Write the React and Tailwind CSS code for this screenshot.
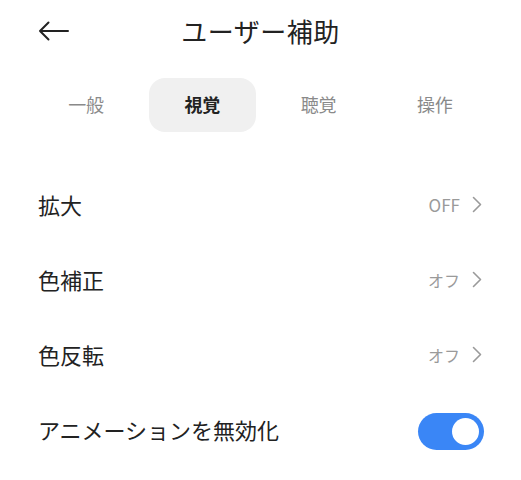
import React, { useState } from "react";

const font = { fontFamily: '"Noto Sans CJK JP", "Noto Sans", sans-serif' };

const tabs = ["一般", "視覚", "聴覚", "操作"];

const rows = [
  { label: "拡大", value: "OFF" },
  { label: "色補正", value: "オフ" },
  { label: "色反転", value: "オフ" },
];

const Chevron = () => (
  <svg width="10" height="17" viewBox="0 0 10 17" fill="none">
    <path d="M1.5 1.5 L8.5 8.5 L1.5 15.5" stroke="#9a9a9a" strokeWidth="1.6" strokeLinecap="round" strokeLinejoin="round" />
  </svg>
);

export default function App() {
  const [active, setActive] = useState(1);
  const [noAnim, setNoAnim] = useState(true);

  return (
    <div className="w-[521px] h-[480px] bg-white text-[#222] overflow-hidden" style={font}>
      {/* header */}
      <div className="grid grid-cols-[1fr_auto_1fr] items-center h-16 px-[38px]">
        <button className="w-[31px] h-[20px] -mt-[2px]">
          <svg width="31" height="20" viewBox="0 0 31 20" fill="none">
            <path d="M30 10 H2 M10.5 1.5 L2 10 L10.5 18.5" stroke="#222" strokeWidth="2" strokeLinecap="round" strokeLinejoin="round" />
          </svg>
        </button>
        <h1 className="text-[26px] leading-none tracking-[0.5px] -mt-[2px]">ユーザー補助</h1>
        <div />
      </div>

      {/* tabs */}
      <div className="grid grid-cols-4 mt-[14px] px-[28px] h-[54px]">
        {tabs.map((t, i) => (
          <div key={t} className="px-[5px]">
            <button
              onClick={() => setActive(i)}
              className={
                "w-full h-full rounded-[16px] text-[18px] pb-[2px] " +
                (i === active ? "bg-[#f0f0f0] font-bold text-[#222]" : "text-[#8a8a8a]")
              }
            >
              {t}
            </button>
          </div>
        ))}
      </div>

      {/* list */}
      <div className="mt-[35px] px-[38px]">
        {rows.map((r) => (
          <div key={r.label} className="flex items-center justify-between h-[75px]">
            <span className="text-[22px]">{r.label}</span>
            <div className="flex items-center gap-[12px] pr-[1px]">
              <span className={(r.value === "OFF" ? "text-[17px]" : "text-[16px]") + " text-[#9a9a9a]"}>
                {r.value}
              </span>
              <Chevron />
            </div>
          </div>
        ))}
        <div className="flex items-center justify-between h-[75px]">
          <span className="text-[22px]">アニメーションを無効化</span>
          <button
            onClick={() => setNoAnim(!noAnim)}
            className={
              "flex items-center w-[66px] h-[37px] rounded-full px-[5px] mr-[-1px] mt-[3px] " +
              (noAnim ? "bg-[#3a86f6] justify-end" : "bg-[#d9d9d9] justify-start")
            }
          >
            <span className="block w-[27px] h-[27px] rounded-full bg-white" />
          </button>
        </div>
      </div>
    </div>
  );
}
